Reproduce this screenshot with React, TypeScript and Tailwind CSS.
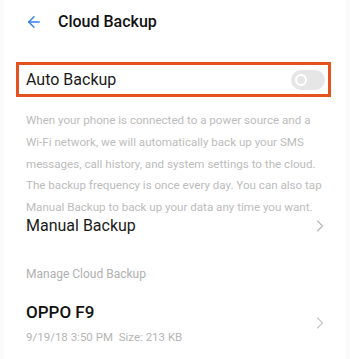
import { ArrowLeft, ChevronRight } from "lucide-react";

const lines = [
  "When your phone is connected to a power source and a",
  "Wi-Fi network, we will automatically back up your SMS",
  "messages, call history, and system settings to the cloud.",
  "The backup frequency is once every day. You can also tap",
  "Manual Backup to back up your data any time you want.",
];

export default function App() {
  return (
    <div className="w-[350px] h-[359px] bg-[#fbfbfb] px-[4px] font-['Roboto',sans-serif] overflow-hidden">
      <div className="h-full bg-white">
        {/* header */}
        <div className="flex items-center h-[42px] pt-[2px] pl-[21px]">
          <ArrowLeft className="w-[18px] h-[18px] text-[#2f7ff0]" strokeWidth={1.8} />
          <span className="ml-[15px] text-[16px] font-medium text-[#111]">Cloud Backup</span>
        </div>

        {/* auto backup row */}
        <div className="mt-[20px] ml-[12px] w-[315px] h-[35px] border-[3px] border-[#e4521f] flex items-center justify-between pl-[7px] pr-[3px]">
          <span className="text-[16px] text-[#1a1a1a]">Auto Backup</span>
          <div className="w-[34px] h-[20px] rounded-full bg-[#e6e6e6] flex items-center pl-[4px]">
            <div className="w-[12px] h-[12px] rounded-full border-[2px] border-white" />
          </div>
        </div>

        <div className="mt-[13px] pl-[22px] text-[11.6px] leading-[21.8px] text-[#bcbcbc] whitespace-nowrap">
          {lines.map((l) => (
            <div key={l}>{l}</div>
          ))}
        </div>

        {/* manual backup */}
        <div className="mt-[-4px] h-[22px] flex items-center justify-between pl-[22px] pr-[16px]">
          <span className="text-[16px] text-[#1a1a1a]">Manual Backup</span>
          <ChevronRight className="w-[20px] h-[20px] text-[#b5b5b5]" strokeWidth={1.3} />
        </div>

        <div className="mt-[28px] pl-[22px] text-[12px] text-[#b0b0b0]">Manage Cloud Backup</div>

        {/* device */}
        <div className="mt-[18px] flex items-center justify-between pl-[22px] pr-[16px]">
          <div className="flex flex-col">
            <span className="text-[17px] font-medium text-[#111] leading-[22px]">OPPO F9</span>
            <span className="mt-[6px] text-[11.5px] text-[#b5b5b5] leading-[16px] whitespace-pre">9/19/18 3:50 PM  Size: 213 KB</span>
          </div>
          <ChevronRight className="w-[20px] h-[20px] text-[#c5c5c5]" strokeWidth={1.3} />
        </div>
      </div>
    </div>
  );
}
